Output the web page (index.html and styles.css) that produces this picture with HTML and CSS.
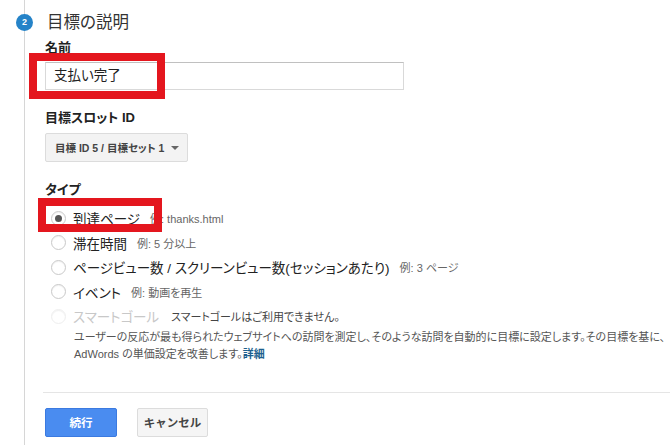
FILE: index.html
```html
<!DOCTYPE html>
<html lang="ja">
<head>
<meta charset="utf-8">
<title>目標の説明</title>
<link rel="stylesheet" href="styles.css">
</head>
<body>
<div class="step">
  <span class="badge">2</span>
  <h2 class="title">目標の説明</h2>

  <div class="label first">名前</div>
  <div class="input">支払い完了</div>

  <div class="label slot">目標スロット ID</div>
  <div class="dropdown"><span>目標 ID 5 / 目標セット 1</span><span class="caret"></span></div>

  <div class="label type">タイプ</div>
  <div class="radios">
    <div class="row"><span class="radio checked"></span><span class="opt">到達ページ</span><span class="hint">例: thanks.html</span></div>
    <div class="row"><span class="radio"></span><span class="opt">滞在時間</span><span class="hint">例: 5 分以上</span></div>
    <div class="row"><span class="radio"></span><span class="opt">ページビュー数 / スクリーンビュー数(セッションあたり)</span><span class="hint">例: 3 ページ</span></div>
    <div class="row"><span class="radio"></span><span class="opt">イベント</span><span class="hint">例: 動画を再生</span></div>
    <div class="row disabled"><span class="radio"></span><span class="opt">スマートゴール</span><span class="hint dark">スマートゴールはご利用できません。</span></div>
  </div>
  <p class="desc">ユーザーの反応が最も得られたウェブサイトへの訪問を測定し、そのような訪問を自動的に目標に設定します。その目標を基に、<br>AdWords の単価設定を改善します。<a class="more" href="#">詳細</a></p>

  <div class="actions">
    <button class="btn primary">続行</button>
    <button class="btn">キャンセル</button>
  </div>
</div>
<div class="mark mark-name"></div>
<div class="mark mark-type"></div>
</body>
</html>
```

FILE: styles.css
```css
html, body {
  margin: 0;
  padding: 0;
  background: #fff;
  overflow: hidden;
}
body {
  font-family: "Liberation Sans", "Noto Sans CJK JP", sans-serif;
  font-feature-settings: "palt";
  color: #222;
  width: 670px;
  height: 445px;
  position: relative;
}
.step {
  margin-left: 24px;
  border-left: 1px solid #d6d6d6;
  padding-left: 20px;
  height: 445px;
  box-sizing: border-box;
  position: relative;
}
.badge {
  position: absolute;
  left: -9px;
  top: 14px;
  width: 17px;
  height: 17px;
  border-radius: 50%;
  background: #2583c8;
  color: #fff;
  font-size: 9px;
  font-weight: bold;
  line-height: 17px;
  text-align: center;
}
.title {
  margin: 0 0 0 2px;
  padding-top: 12px;
  font-size: 16.5px;
  line-height: 20px;
  font-weight: normal;
  color: #333;
}
.label {
  font-size: 13px;
  font-weight: bold;
  line-height: 16px;
  color: #222;
}
.label.first { margin-top: 8px; }
.label.slot { margin-top: 20px; }
.label.type { margin-top: 20px; }
.input {
  margin-top: 6px;
  width: 359px;
  height: 28px;
  box-sizing: border-box;
  border: 1px solid #d9d9d9;
  border-top-color: #c0c0c0;
  padding-left: 8px;
  font-size: 13.5px;
  line-height: 26px;
  color: #222;
}
.dropdown {
  margin-top: 7px;
  width: 143px;
  height: 29px;
  box-sizing: border-box;
  border: 1px solid #dcdcdc;
  border-radius: 2px;
  background: #f3f3f3;
  display: flex;
  align-items: center;
  gap: 7px;
  padding: 0 0 0 9px;
  font-size: 10.5px;
  font-weight: bold;
  color: #444;
}
.caret {
  width: 0;
  height: 0;
  border-left: 4px solid transparent;
  border-right: 4px solid transparent;
  border-top: 4px solid #666;
}
.radios {
  margin-top: 8px;
}
.row {
  height: 24.5px;
  display: flex;
  align-items: center;
}
.radio {
  width: 15px;
  height: 15px;
  box-sizing: border-box;
  margin-left: 6px;
  border: 1px solid #c9c9c9;
  border-radius: 50%;
  background: #fff;
  box-shadow: inset 0 1px 1px rgba(0,0,0,0.06);
  display: flex;
  align-items: center;
  justify-content: center;
}
.radio.checked::after {
  content: "";
  width: 7px;
  height: 7px;
  border-radius: 50%;
  background: #555;
}
.opt {
  margin-left: 7px;
  font-size: 13.5px;
  color: #222;
}
.hint {
  margin-left: 10px;
  font-size: 11px;
  color: #666;
}
.disabled .radio { border-color: #eee; }
.disabled .opt { color: #c8c8c8; }
.hint.dark { color: #444; margin-left: 12px; }
.desc {
  margin: 0;
  padding-left: 29px;
  font-size: 11px;
  line-height: 17px;
  color: #555;
  white-space: nowrap;
}
.more {
  color: #1d5f8e;
  font-weight: bold;
  text-decoration: none;
}
.actions {
  margin-top: 29px;
  margin-left: -2px;
  border-top: 1px solid #e5e5e5;
  padding-top: 15px;
  padding-left: 2px;
  display: flex;
  gap: 20px;
}
.btn {
  height: 29px;
  width: 71px;
  box-sizing: border-box;
  border: 1px solid #dcdcdc;
  border-radius: 2px;
  background: #f5f5f5;
  font-family: inherit;
  font-size: 11.5px;
  font-weight: bold;
  color: #444;
  padding: 0;
}
.btn.primary {
  width: 72px;
  background: #4a8cf0;
  border-color: #3b7ae0;
  color: #fff;
}
.mark {
  position: absolute;
  border: 8px solid #e4161e;
  box-sizing: border-box;
}
.mark-name {
  left: 29px;
  top: 53px;
  width: 136px;
  height: 46px;
}
.mark-type {
  left: 38px;
  top: 198px;
  width: 124px;
  height: 34px;
}
```
